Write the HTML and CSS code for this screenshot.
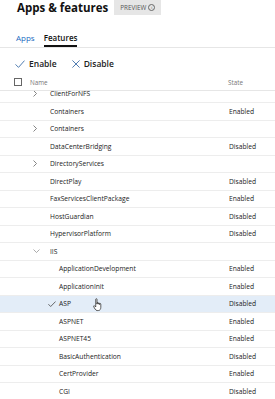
FILE: index.html
```html
<!DOCTYPE html>
<html lang="en">
<head>
    <meta charset="UTF-8">
    <meta name="viewport" content="width=device-width, initial-scale=1.0">
    <title>Apps &amp; features</title>
    <link rel="stylesheet" href="styles.css">
</head>
<body>
    <div class="page">
        <div class="title-bar">
            <h1>Apps &amp; features</h1>
            <span class="badge">PREVIEW <span class="info">i</span></span>
        </div>

        <div class="tabs">
            <span class="tab">Apps</span>
            <span class="tab active">Features</span>
        </div>

        <div class="toolbar">
            <button class="tool">
                <svg width="10" height="8" viewBox="0 0 10 8"><path d="M0.5 4.4 L3.5 7.4 L9.5 0.6" fill="none" stroke="#3d6ea8" stroke-width="0.9"/></svg>
                Enable
            </button>
            <button class="tool">
                <svg width="8" height="8" viewBox="0 0 8 8"><path d="M0.4 0.4 L7.6 7.6 M7.6 0.4 L0.4 7.6" fill="none" stroke="#3d6ea8" stroke-width="0.9"/></svg>
                Disable
            </button>
        </div>

        <div class="list-header">
            <span class="checkbox"></span>
            <span class="col-name">Name</span>
            <span class="col-state">State</span>
        </div>

        <div class="list">
            <div class="rows" id="rows"></div>
        </div>
    </div>

    <script>
        const features = [
            { name: 'ClientForNFS', level: 1, toggle: 'right', state: '' },
            { name: 'Containers', level: 1, state: 'Enabled' },
            { name: 'Containers', level: 1, toggle: 'right', state: '' },
            { name: 'DataCenterBridging', level: 1, state: 'Disabled' },
            { name: 'DirectoryServices', level: 1, toggle: 'right', state: '' },
            { name: 'DirectPlay', level: 1, state: 'Disabled' },
            { name: 'FaxServicesClientPackage', level: 1, state: 'Enabled' },
            { name: 'HostGuardian', level: 1, state: 'Disabled' },
            { name: 'HypervisorPlatform', level: 1, state: 'Disabled' },
            { name: 'IIS', level: 1, toggle: 'down', state: '' },
            { name: 'ApplicationDevelopment', level: 2, state: 'Enabled' },
            { name: 'ApplicationInit', level: 2, state: 'Enabled' },
            { name: 'ASP', level: 2, state: 'Disabled', selected: true },
            { name: 'ASPNET', level: 2, state: 'Enabled' },
            { name: 'ASPNET45', level: 2, state: 'Enabled' },
            { name: 'BasicAuthentication', level: 2, state: 'Disabled' },
            { name: 'CertProvider', level: 2, state: 'Enabled' },
            { name: 'CGI', level: 2, state: 'Disabled' }
        ];

        const icons = {
            right: '<svg width="4" height="7" viewBox="0 0 4 7"><path d="M0.5 0.5 L3.5 3.5 L0.5 6.5" fill="none" stroke="#666" stroke-width="0.8"/></svg>',
            down: '<svg width="7" height="4" viewBox="0 0 7 4"><path d="M0.5 0.5 L3.5 3.5 L6.5 0.5" fill="none" stroke="#888" stroke-width="0.7"/></svg>',
            check: '<svg width="8" height="6" viewBox="0 0 8 6"><path d="M0.4 3.2 L2.7 5.5 L7.6 0.5" fill="none" stroke="#444" stroke-width="0.8"/></svg>'
        };

        const cursor = '<svg class="cursor" width="10" height="14" viewBox="0 0 11 15"><path d="M3 1.2 C3 0.4 4.4 0.4 4.4 1.2 L4.4 6.5 L4.4 5.3 C4.4 4.6 5.8 4.6 5.8 5.3 L5.8 6.6 L5.8 5.8 C5.8 5.1 7.2 5.1 7.2 5.8 L7.2 7 L7.2 6.4 C7.2 5.7 8.6 5.7 8.6 6.4 L8.6 10 C8.6 12 7.6 13.6 6 13.6 L4.6 13.6 C3.6 13.6 2.9 12.9 2.3 12 L0.7 9.3 C0.3 8.6 1.2 7.9 1.8 8.5 L3 9.7 Z" fill="#fff" stroke="#222" stroke-width="0.8" stroke-linejoin="round"/></svg>';

        const container = document.getElementById('rows');
        features.forEach(item => {
            const row = document.createElement('div');
            row.className = 'row level-' + item.level + (item.selected ? ' selected' : '');
            let icon = '';
            if (item.toggle) icon = icons[item.toggle];
            if (item.selected) icon = icons.check;
            row.innerHTML =
                '<span class="cell-name"><span class="toggle">' + icon + '</span>' +
                '<span class="label">' + item.name + '</span>' +
                (item.selected ? cursor : '') + '</span>' +
                '<span class="cell-state">' + item.state + '</span>';
            container.appendChild(row);
        });
    </script>
</body>
</html>
```

FILE: styles.css
```css
body {
    font-family: 'Open Sans', 'Noto Sans', sans-serif;
    background-color: #fff;
    color: #333;
    margin: 0;
    padding: 0;
}
.page {
    width: 275px;
    height: 399px;
    overflow: hidden;
    display: flex;
    flex-direction: column;
}
.title-bar {
    display: flex;
    align-items: center;
    gap: 6px;
    padding-left: 17px;
    height: 16px;
}
h1 {
    margin: 0;
    font-size: 11.5px;
    font-weight: 700;
    color: #111;
    line-height: 16px;
}
.badge {
    background-color: #e6e6e6;
    color: #555;
    font-size: 6.3px;
    padding: 0 6px;
    height: 15px;
    display: flex;
    align-items: center;
    gap: 2px;
    margin-top: -1px;
}
.info {
    display: inline-flex;
    align-items: center;
    justify-content: center;
    width: 5px;
    height: 5px;
    border: 0.7px solid #666;
    border-radius: 50%;
    font-size: 4px;
    line-height: 1;
}
.tabs {
    display: flex;
    gap: 9px;
    padding-left: 16px;
    margin-top: 14px;
    border-bottom: 1px solid #e6e6e6;
    height: 17px;
}
.tab {
    font-size: 8px;
    color: #1a6bbf;
    line-height: 14px;
    padding-top: 1px;
}
.tab.active {
    color: #111;
    font-weight: 600;
    border-bottom: 2px solid #111;
}
.toolbar {
    display: flex;
    gap: 15px;
    padding-left: 15px;
    margin-top: 9px;
    height: 13px;
}
.tool {
    display: flex;
    align-items: center;
    gap: 4px;
    border: none;
    background: none;
    padding: 0;
    font-family: inherit;
    font-size: 8.5px;
    font-weight: 600;
    color: #222;
}
.list-header {
    display: flex;
    align-items: center;
    height: 16px;
    margin-top: 4px;
    border-bottom: 1.5px solid #e6e6e6;
    font-size: 6.3px;
    color: #777;
    padding-left: 14px;
}
.checkbox {
    width: 8px;
    height: 8px;
    border: 1px solid #666;
    box-sizing: border-box;
}
.col-name {
    margin-left: 8px;
    width: 198px;
}
.list {
    flex: 1;
    overflow: hidden;
}
.rows {
    margin-top: -5.5px;
}
.row {
    display: flex;
    align-items: center;
    height: 17.5px;
    box-sizing: border-box;
    border-bottom: 1px solid #ededed;
    font-size: 6.7px;
    color: #222;
}
.row.selected {
    background-color: #e3edf8;
}
.cell-name {
    display: flex;
    align-items: center;
    width: 229px;
    box-sizing: border-box;
    position: relative;
}
.level-1 .cell-name {
    padding-left: 33px;
}
.level-2 .cell-name {
    padding-left: 48px;
}
.toggle {
    display: flex;
    align-items: center;
    width: 17px;
}
.level-2 .toggle {
    width: 11px;
}
.cursor {
    position: absolute;
    left: 93px;
    top: -1px;
}
.cell-state {
    color: #222;
}
```
